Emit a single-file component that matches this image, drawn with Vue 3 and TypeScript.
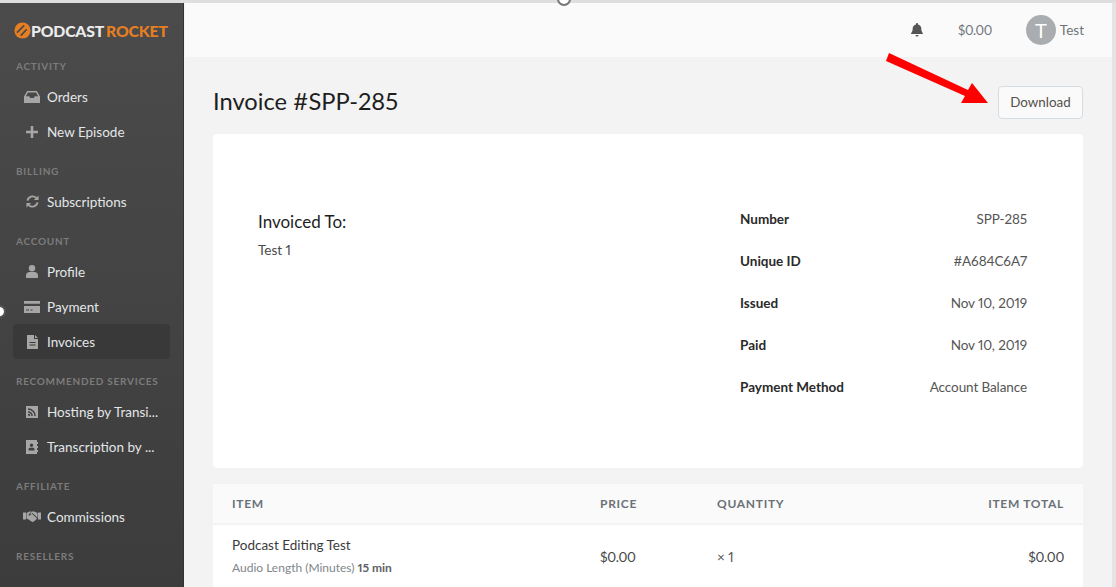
<script setup lang="ts">
interface NavItem { label: string; icon: string; active?: boolean }
interface NavSection { title: string; items: NavItem[] }

const sections: NavSection[] = [
  { title: 'ACTIVITY', items: [{ label: 'Orders', icon: 'inbox' }, { label: 'New Episode', icon: 'plus' }] },
  { title: 'BILLING', items: [{ label: 'Subscriptions', icon: 'sync' }] },
  { title: 'ACCOUNT', items: [{ label: 'Profile', icon: 'user' }, { label: 'Payment', icon: 'card' }, { label: 'Invoices', icon: 'file', active: true }] },
  { title: 'RECOMMENDED SERVICES', items: [{ label: 'Hosting by Transi...', icon: 'rss' }, { label: 'Transcription by ...', icon: 'contact' }] },
  { title: 'AFFILIATE', items: [{ label: 'Commissions', icon: 'hands' }] },
  { title: 'RESELLERS', items: [] },
]

const meta = [
  ['Number', 'SPP-285'],
  ['Unique ID', '#A684C6A7'],
  ['Issued', 'Nov 10, 2019'],
  ['Paid', 'Nov 10, 2019'],
  ['Payment Method', 'Account Balance'],
]
</script>

<template>
  <div class="app">
    <aside class="sidebar">
      <div class="logo">
        <svg class="logo-mark" viewBox="0 0 20 20" width="17" height="17">
          <circle cx="10" cy="10" r="9.500" fill="#e67e22" />
          <path d="M3.500 12.500 12 4M8 16l7-7.500" stroke="#4a4a4a" stroke-width="2" fill="none" />
        </svg>
        <span class="logo-a">PODCAST</span><span class="logo-b">ROCKET</span>
      </div>
      <section v-for="s in sections" :key="s.title" class="section">
        <h4 class="section-title">{{ s.title }}</h4>
        <a v-for="i in s.items" :key="i.label" class="nav-item" :class="{ active: i.active }">
          <span class="nav-icon">
            <svg v-if="i.icon === 'inbox'" viewBox="0 0 16 12" width="16" height="12">
              <path fill="#a6a6a6" d="M3.200 0h9.600l3.200 5.500V12H0V5.500zM4 1.400 1.900 5.200h3.300l1 1.800h3.600l1-1.800h3.300L12 1.400z" fill-rule="evenodd" />
            </svg>
            <svg v-else-if="i.icon === 'plus'" viewBox="0 0 12 12" width="12" height="12">
              <path fill="#a6a6a6" d="M4.700 0h2.600v4.700H12v2.600H7.300V12H4.700V7.300H0V4.700h4.700z" />
            </svg>
            <svg v-else-if="i.icon === 'sync'" viewBox="0 0 14 14" width="13" height="13">
              <path fill="none" stroke="#a6a6a6" stroke-width="2" d="M1.600 6A5.500 5.500 0 0 1 11 3.200M12.400 8A5.500 5.500 0 0 1 3 10.800" />
              <path fill="#a6a6a6" d="M13.500.5v5h-5zM.5 13.500v-5h5z" />
            </svg>
            <svg v-else-if="i.icon === 'user'" viewBox="0 0 12 13" width="12" height="13">
              <circle cx="6" cy="3.200" r="3.200" fill="#a6a6a6" />
              <path fill="#a6a6a6" d="M0 13v-2.400C0 8.400 1.600 7 3.400 7h5.200C10.400 7 12 8.400 12 10.600V13z" />
            </svg>
            <svg v-else-if="i.icon === 'card'" viewBox="0 0 16 12" width="16" height="12">
              <path fill="#a6a6a6" d="M0 0h16v2.800H0zM0 5h16v7H0zM2 8.500v1h3v-1zm4.500 0v1h2v-1z" fill-rule="evenodd" />
            </svg>
            <svg v-else-if="i.icon === 'file'" viewBox="0 0 11 14" width="11" height="14">
              <path fill="#a6a6a6" fill-rule="evenodd" d="M0 0h7v4h4v10H0zM8 0l3 3H8zM2.500 7v1h6V7zm0 2.500v1h6v-1z" />
            </svg>
            <svg v-else-if="i.icon === 'rss'" viewBox="0 0 12 12" width="12" height="12">
              <path fill="#a6a6a6" fill-rule="evenodd" d="M0 0h12v12H0zM2 2.200v1.500a6.300 6.300 0 0 1 6.300 6.300h1.500A7.800 7.800 0 0 0 2 2.200zm0 3v1.500A3.300 3.300 0 0 1 5.300 10h1.500A4.800 4.800 0 0 0 2 5.200zM3.100 7.800a1.100 1.100 0 1 0 0 2.200 1.100 1.100 0 0 0 0-2.200z" />
            </svg>
            <svg v-else-if="i.icon === 'contact'" viewBox="0 0 12 14" width="12" height="14">
              <path fill="#a6a6a6" fill-rule="evenodd" d="M0 0h11v14H0zM5.500 3.500a1.700 1.700 0 1 0 0 3.400 1.700 1.700 0 0 0 0-3.400zM2.500 10.500h6V9.300C8.500 8.300 7.700 7.800 7 7.800H4C3.300 7.800 2.500 8.300 2.500 9.300z" />
              <path fill="#a6a6a6" d="M11 2h1v2h-1zM11 6h1v2h-1zM11 10h1v2h-1z" />
            </svg>
            <svg v-else viewBox="0 0 18 11" width="18" height="11">
              <path fill="#a6a6a6" d="M0 1.500h3v7H0zM15 1.500h3v7h-3zM3.500 2l3-1.500h2L5.800 3.200c-.7.800.6 1.900 1.500 1.100L9 2.800l5 4.700-1 1.200-1 .8-1.200 1-1.300.5-1.800-1-2.200-1.500-2-1z" />
              <path fill="#a6a6a6" d="M9 .5h2.500l3 1.500v4.700L9.500 2 8 3.500 7 3z" />
            </svg>
          </span>
          <span class="nav-label">{{ i.label }}</span>
        </a>
      </section>
    </aside>

    <div class="content">
      <header class="topbar">
        <svg class="bell" viewBox="0 0 12 14" width="12" height="14">
          <path fill="#555" d="M6 0c.6 0 1 .4 1 1v.6c2 .4 3.300 2 3.300 4 0 3.400 1.700 4.400 1.700 5.400H0c0-1 1.700-2 1.700-5.400 0-2 1.300-3.600 3.300-4V1c0-.6.400-1 1-1zM4.500 12h3a1.500 1.500 0 0 1-3 0z" />
        </svg>
        <span class="balance">$0.00</span>
        <span class="avatar">T</span>
        <span class="username">Test</span>
      </header>

      <main class="main">
        <div class="title-row">
          <h1 class="title">Invoice #SPP-285</h1>
          <button class="download">Download</button>
        </div>

        <div class="card invoice">
          <div class="to">
            <h3 class="to-title">Invoiced To:</h3>
            <p class="to-name">Test 1</p>
          </div>
          <dl class="meta">
            <div v-for="m in meta" :key="m[0]" class="meta-row">
              <dt>{{ m[0] }}</dt>
              <dd>{{ m[1] }}</dd>
            </div>
          </dl>
        </div>

        <div class="card table">
          <div class="t-row t-head">
            <span>ITEM</span><span>PRICE</span><span>QUANTITY</span><span class="right">ITEM TOTAL</span>
          </div>
          <div class="t-row t-body">
            <div class="item">
              <div class="item-name">Podcast Editing Test</div>
              <div class="item-sub">Audio Length (Minutes) <b>15 min</b></div>
            </div>
            <span class="amount">$0.00</span>
            <span class="qty">× 1</span>
            <span class="right amount">$0.00</span>
          </div>
        </div>
      </main>
    </div>

    <svg class="arrow" viewBox="0 0 110 60" width="110" height="60">
      <path fill="#f00" d="M4 0 83 37l4-7 16 20H76l4-7L1 8z" />
    </svg>
    <span class="dot-top"></span>
    <span class="dot-left"></span>
  </div>
</template>

<style scoped>
.app {
  position: relative;
  display: flex;
  width: 1116px;
  height: 587px;
  overflow: hidden;
  box-sizing: border-box;
  padding-top: 3px;
  background: linear-gradient(#dedede 3px, #f3f3f3 3px);
  font-family: Lato, "Open Sans", sans-serif;
  font-variant-numeric: proportional-nums;
  color: #333;
}
.sidebar {
  flex: 0 0 184px;
  box-sizing: border-box;
  background: linear-gradient(#4b4b4b, #3c3c3c);
  border-right: 1px solid #333;
  overflow: hidden;
}
.logo {
  display: flex;
  align-items: center;
  height: 54px;
  padding-left: 14px;
  font-size: 15.800px;
  font-weight: 900;
  letter-spacing: -0.2px;
}
.logo-mark { flex: none; }
.logo-a { color: #ececec; }
.logo-b { color: #e67e22; margin-left: 2px; }
.section { padding-bottom: 13px; }
.section-title {
  margin: 0;
  padding-left: 16px;
  height: 18px;
  line-height: 18px;
  font-size: 10px;
  font-weight: 700;
  letter-spacing: 0.75px;
  color: #7c7c7c;
}
.nav-item {
  display: flex;
  align-items: center;
  height: 35px;
  margin: 0 13px;
  border-radius: 4px;
  color: #e3e6e8;
  font-size: 13.500px;
}
.section-title + .nav-item { margin-top: 4px; }
.nav-item.active { background: #393939; }
.nav-icon {
  flex: 0 0 34px;
  display: flex;
  align-items: center;
  justify-content: center;
  box-sizing: border-box;
  padding-left: 6px;
  padding-right: 2px;
}
.nav-label {
  white-space: nowrap;
}
.content {
  flex: 1;
  min-width: 0;
  display: flex;
  flex-direction: column;
  border-right: 4px solid #e4e4e4;
  margin-left: 1px;
}
.topbar {
  flex: 0 0 54px;
  display: flex;
  align-items: center;
  justify-content: flex-end;
  background: #fafafa;
  font-size: 13.500px;
  color: #6f7479;
  padding-right: 28px;
}
.bell { margin-right: 35px; }
.balance { margin-right: 34px; font-size: 13px; letter-spacing: -0.4px; }
.avatar {
  width: 30px;
  height: 30px;
  border-radius: 50%;
  background: #a9adb0;
  color: #fff;
  display: flex;
  align-items: center;
  justify-content: center;
  font-size: 20px;
  margin-right: 4px;
}
.main {
  flex: 1;
  min-height: 0;
  padding: 29px 29px 0 28px;
}
.title-row {
  display: flex;
  align-items: center;
  justify-content: space-between;
  height: 33px;
  margin-bottom: 15px;
}
.title {
  margin: -3px 0 0;
  font-size: 23.700px;
  font-weight: 400;
  color: #1e1e1e;
}
.download {
  width: 85px;
  height: 33px;
  padding: 0 0 2px;
  border: 1px solid #d5dde3;
  border-radius: 4px;
  background: #fafafa;
  color: #55504c;
  font: 400 13.400px Lato, "Open Sans", sans-serif;
}
.card {
  background: #fff;
  border-radius: 4px;
}
.invoice {
  height: 334px;
  box-sizing: border-box;
  padding: 64px 56px 0 45px;
  display: flex;
  justify-content: space-between;
  margin-bottom: 16px;
}
.to-title {
  margin: 14px 0 0;
  font-size: 17px;
  font-weight: 400;
  line-height: 20px;
  color: #1e1e1e;
}
.to-name {
  margin: 9px 0 0;
  font-size: 13.500px;
  line-height: 18px;
  color: #4a4a4a;
}
.meta {
  width: 287px;
  margin: 0;
}
.meta-row {
  display: flex;
  justify-content: space-between;
  align-items: center;
  height: 42px;
  font-size: 13.500px;
  color: #555;
}
.meta-row dt { font-weight: 700; color: #2a2a2a; }
.meta-row dd { margin: 0; letter-spacing: -0.1px; }
.t-row {
  display: grid;
  grid-template-columns: 368px 117px 1fr 1fr;
  align-items: center;
  padding: 0 19px;
}
.t-head {
  height: 39px;
  background: #fafafa;
  border-bottom: 2px solid #f3f3f3;
  font-size: 12px;
  font-weight: 700;
  letter-spacing: 0.7px;
  color: #6b7177;
}
.t-body {
  height: 64px;
  font-size: 13.500px;
  color: #444;
}
.item { margin-top: -2px; }
.amount { letter-spacing: -0.3px; margin-top: -1px; }
.right { text-align: right; }
.qty { color: #555; margin-top: -1px; }
.item-name { font-size: 13.500px; line-height: 18px; color: #3c3c3c; }
.item-sub { margin-top: 6px; font-size: 12px; line-height: 16px; color: #80868b; }
.item-sub b { color: #5c6166; }
.arrow { position: absolute; left: 885px; top: 53px; }
.dot-top {
  position: absolute;
  left: 557px;
  top: -8px;
  width: 10px;
  height: 10px;
  border: 2px solid #777;
  border-radius: 50%;
  background: #fff;
}
.dot-left {
  position: absolute;
  left: -7px;
  top: 305px;
  width: 9px;
  height: 9px;
  border: 2px solid #555;
  border-radius: 50%;
  background: #fff;
}
</style>
